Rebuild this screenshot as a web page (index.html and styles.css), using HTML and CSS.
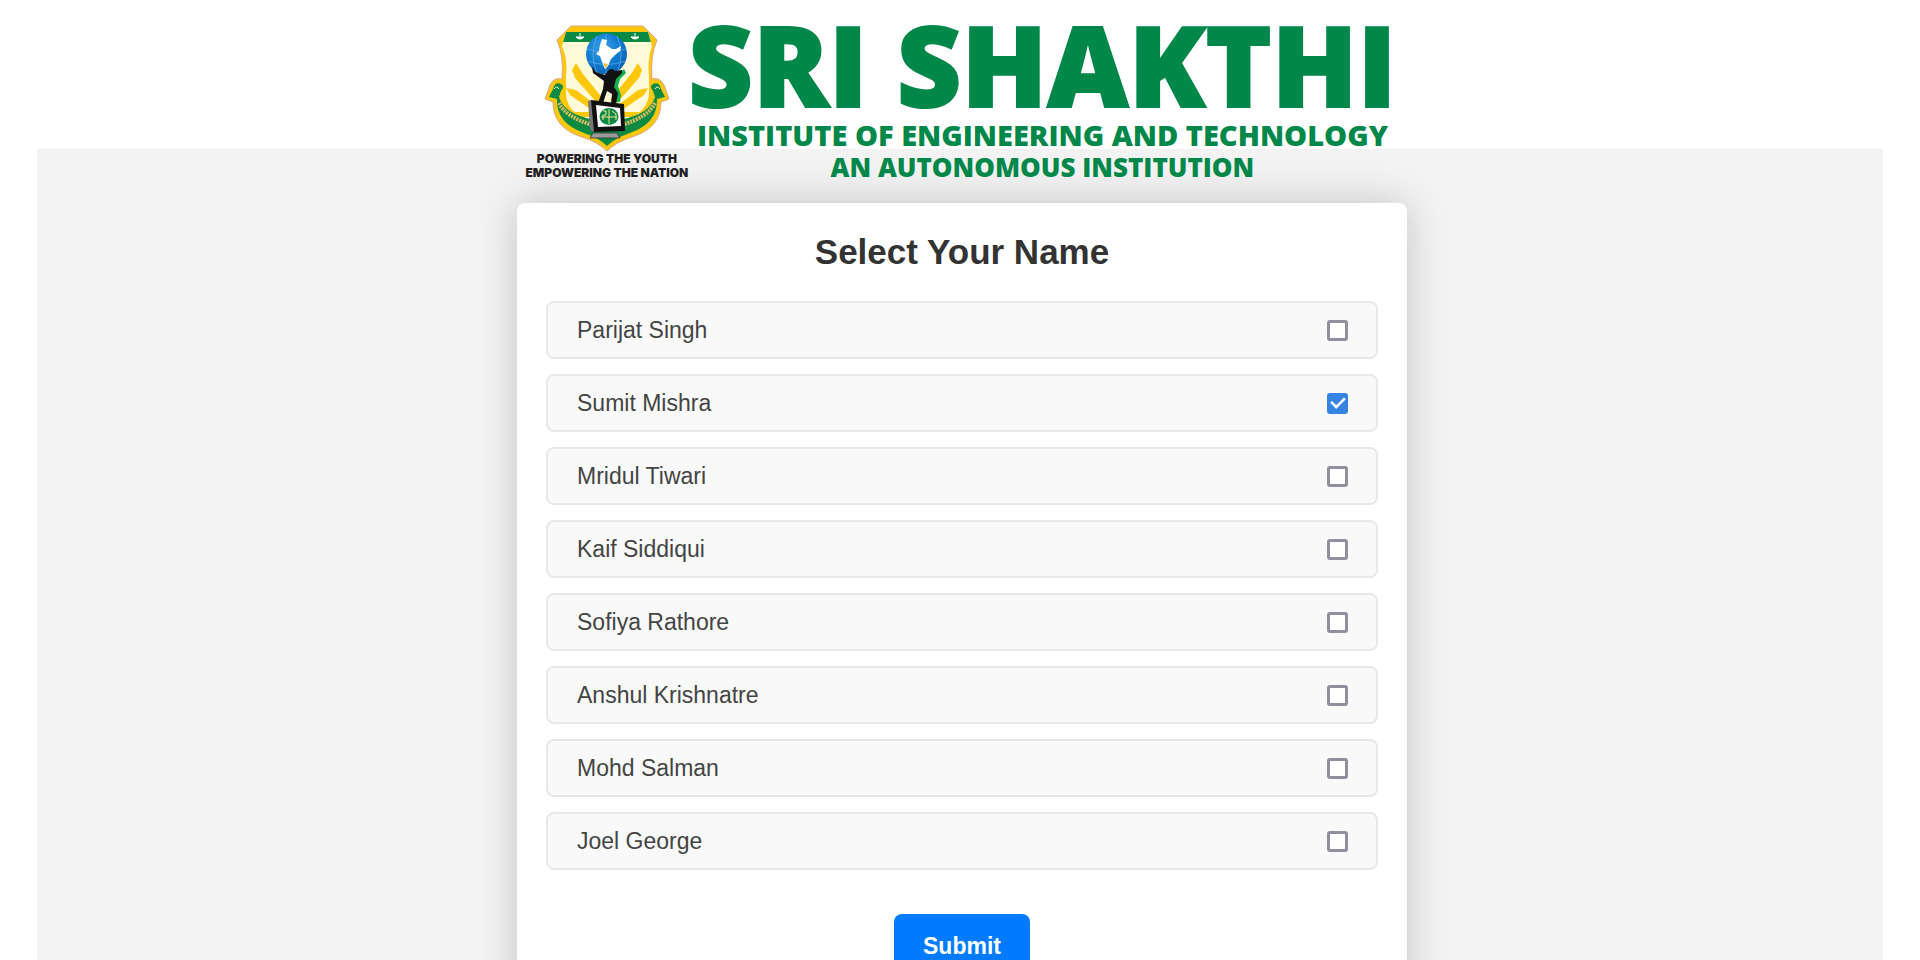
FILE: index.html
```html
<!DOCTYPE html>
<html lang="en">
<head>
<meta charset="utf-8">
<title>Select Your Name</title>
<link rel="stylesheet" href="styles.css">
</head>
<body>
<header class="brand">
  <div class="brand-badge">
    <svg class="crest" viewBox="0 0 130 128" role="img" aria-label="Sri Shakthi crest">
      <defs>
        <clipPath id="field"><path d="M24 8H106L110 22Q105 35 107 52V70Q106 92 65 106Q24 92 24 70V52Q26 35 20 22Z"/></clipPath>
        <radialGradient id="globe" cx=".4" cy=".35" r=".7"><stop offset="0" stop-color="#3ba0e6"/><stop offset=".6" stop-color="#0f7bd0"/><stop offset="1" stop-color="#0a5fae"/></radialGradient>
      </defs>
      <path d="M29 2H101L115 16Q108 32 110 55Q118 53 122 61L127 75L119 78Q119 104 90 113Q74 118 65 127Q56 118 40 113Q11 104 11 78L3 75L8 61Q12 53 20 55Q22 32 15 16Z" fill="#fdc70c" stroke="#d9a58c" stroke-width="1"/>
      <g clip-path="url(#field)">
        <path d="M15 5H115V110H15Z" fill="#fffbd9"/>
        <g fill="#fdc70c">
          <path d="M62 76L41 50L34 39L30 46L33 54L56 80Z"/>
          <path d="M68 76L89 50L96 39L100 46L97 54L74 80Z"/>
          <path d="M55 82L34 66L24 64L28 71L50 86Z"/>
          <path d="M75 82L96 66L106 64L102 71L80 86Z"/>
          <path d="M54 88H24L34 93H54ZM76 88H106L96 93H76Z"/>
        </g>
        <path d="M15 4H115L112 18H18Z" fill="#0b8a43"/>
      </g>
      <path d="M11 65Q13 57 19 60Q23 62 19 67L17 73Q21 86 38 92Q52 97 65 97Q78 97 92 92Q109 86 113 73L111 67Q107 62 111 60Q117 57 119 65L123 73L115 75Q116 99 88 109Q73 114 65 122Q57 114 42 109Q14 99 15 75L7 73Z" fill="#0b8a43"/>
      <g fill="none" stroke="#d9bd62" stroke-width="4" stroke-dasharray="2 1">
        <path d="M17 79Q24 93 50 101"/><path d="M113 79Q106 93 80 101"/>
      </g>
      <g fill="none" stroke="#fffbd9" stroke-width="1">
        <path d="M12 65Q15 61 17 65M118 65Q115 61 113 65"/>
      </g>
      <path d="M34 13Q38 17 42 13ZM38 9V12M89 13Q93 17 97 13ZM93 9V12" fill="#fff" stroke="#fff"/>
      <circle cx="64.500" cy="30" r="20.500" fill="url(#globe)"/>
      <path d="M45 25Q64 32 84 25M45 37Q64 44 84 37M64 10V50M55 12Q47 30 55 49M75 12Q83 30 75 49" fill="none" stroke="#6cb9ec" stroke-width=".6"/>
      <path d="M60 15L65 16L64 21L70 25H74L79 22L78 27L73 31L69 35L66 42L63 45L60 38L58 32L54 30L57 27L58 21Z" fill="#fff"/>
      <path d="M61 39L64 45L66 40Z" fill="#f6c24d"/>
      <path d="M82 45L84 49L78 55L76 62L79 71L78 78H73L70 66L74 52Z" fill="#12b04d"/>
      <path d="M50 43L54 48L63 51L66 47Q69 43 73 47L80 46L80 49L74 55L72 63L76 69L74 80H69L70 70L65 67L61 79H56L61 65L62 57L51 49Z" fill="#111"/>
      <path d="M49 76L82 80L83 107L52 108L48 106Z" fill="#111"/>
      <path d="M49 76L52 108L48 106L46 77Z" fill="#777"/>
      <path d="M54 81L78 84L79 102L56 103Z" fill="#fff"/>
      <ellipse cx="67" cy="92.500" rx="9.500" ry="8.500" fill="#0b8a43"/>
      <path d="M61 87H64V91H61M67 85V100M70 87L74 90V96M61 96V91M59 93H75" fill="none" stroke="#f3e39c"/>
      <path d="M51 109H75L78 114H48Z" fill="#999" stroke="#333" stroke-width=".8"/>
    </svg>
    <p class="motto">POWERING THE YOUTH<br>EMPOWERING THE NATION</p>
  </div>
  <div class="brand-text">
    <p class="brand-name">SRI SHAKTHI</p>
    <p class="brand-line">INSTITUTE OF ENGINEERING AND TECHNOLOGY</p>
    <p class="brand-status">AN AUTONOMOUS INSTITUTION</p>
  </div>
</header>
<main class="page">
  <form class="card">
    <h1 class="card-title">Select Your Name</h1>
    <ul class="names">
      <li><label class="name-row"><span>Parijat Singh</span><input class="tick" type="checkbox"></label></li>
      <li><label class="name-row"><span>Sumit Mishra</span><input class="tick" type="checkbox" checked></label></li>
      <li><label class="name-row"><span>Mridul Tiwari</span><input class="tick" type="checkbox"></label></li>
      <li><label class="name-row"><span>Kaif Siddiqui</span><input class="tick" type="checkbox"></label></li>
      <li><label class="name-row"><span>Sofiya Rathore</span><input class="tick" type="checkbox"></label></li>
      <li><label class="name-row"><span>Anshul Krishnatre</span><input class="tick" type="checkbox"></label></li>
      <li><label class="name-row"><span>Mohd Salman</span><input class="tick" type="checkbox"></label></li>
      <li><label class="name-row"><span>Joel George</span><input class="tick" type="checkbox"></label></li>
    </ul>
    <button class="submit" type="button">Submit</button>
  </form>
</main>
</body>
</html>
```
FILE: styles.css
```css
* {
  box-sizing: border-box;
}

body {
  margin: 0;
  padding: 0 37px;
  background: #fff;
  color: #333;
  font-family: "Liberation Sans", Arial, sans-serif;
}

p,
h1,
ul {
  margin: 0;
  padding: 0;
}

.brand {
  position: relative;
  z-index: 1;
  display: flex;
  justify-content: center;
  height: 149px;
  padding-left: 2px;
  white-space: nowrap;
}

.brand-badge {
  display: flex;
  flex-direction: column;
  align-items: center;
  padding-top: 24px;
}

.crest {
  width: 130px;
  height: 128px;
  flex: none;
}

.motto {
  color: #231f20;
  font-family: Inter, "Liberation Sans", sans-serif;
  font-size: 12px;
  font-weight: 900;
  line-height: 14px;
  text-align: center;
}

.brand-text {
  padding-top: 8px;
  color: #00874a;
  font-family: "Open Sans", sans-serif;
  font-weight: 800;
  text-align: center;
}

.brand-name {
  font-size: 112px;
  line-height: 112px;
  -webkit-text-stroke: 2px;
}

.brand-line {
  font-size: 29px;
  line-height: 30px;
}

.brand-status {
  font-size: 26px;
  line-height: 34px;
}

.page {
  display: flex;
  justify-content: center;
  padding: 54px 20px 60px 24px;
  background: #f3f3f3;
}

.card {
  display: flex;
  flex-direction: column;
  align-items: center;
  width: 100%;
  max-width: 890px;
  padding: 29px;
  border-radius: 8px;
  background: #fff;
  box-shadow: 0 0 40px rgba(0, 0, 0, 0.2);
}

.card-title {
  margin-bottom: 29px;
  font-size: 35px;
  line-height: 40px;
}

.names {
  display: flex;
  flex-direction: column;
  gap: 15px;
  width: 100%;
  margin-bottom: 44px;
  list-style: none;
}

.name-row {
  display: flex;
  align-items: center;
  justify-content: space-between;
  height: 58px;
  padding: 0 28px 0 29px;
  border: 2px solid #e8e8e8;
  border-radius: 8px;
  background: #f9f9f9;
  color: #444;
  font-size: 23px;
}

.tick {
  appearance: none;
  width: 21px;
  height: 21px;
  margin: 0;
  border: 3px solid #8f8f9d;
  border-radius: 3px;
  background: #fff;
}

.tick:checked {
  border-color: #3584e4;
  background: #3584e4;
  display: grid;
  place-items: center;
}

.tick:checked::after {
  content: "";
  width: 13px;
  height: 7px;
  border: solid #fff;
  border-width: 0 0 3px 3px;
  rotate: -45deg;
  translate: 0 -2px;
  scale: 0.85;
}

.submit {
  padding: 18px 29px;
  border: 0;
  border-radius: 8px;
  background: #007bff;
  color: #fff;
  font-family: inherit;
  font-size: 23px;
  font-weight: 700;
  line-height: 28px;
}
```
